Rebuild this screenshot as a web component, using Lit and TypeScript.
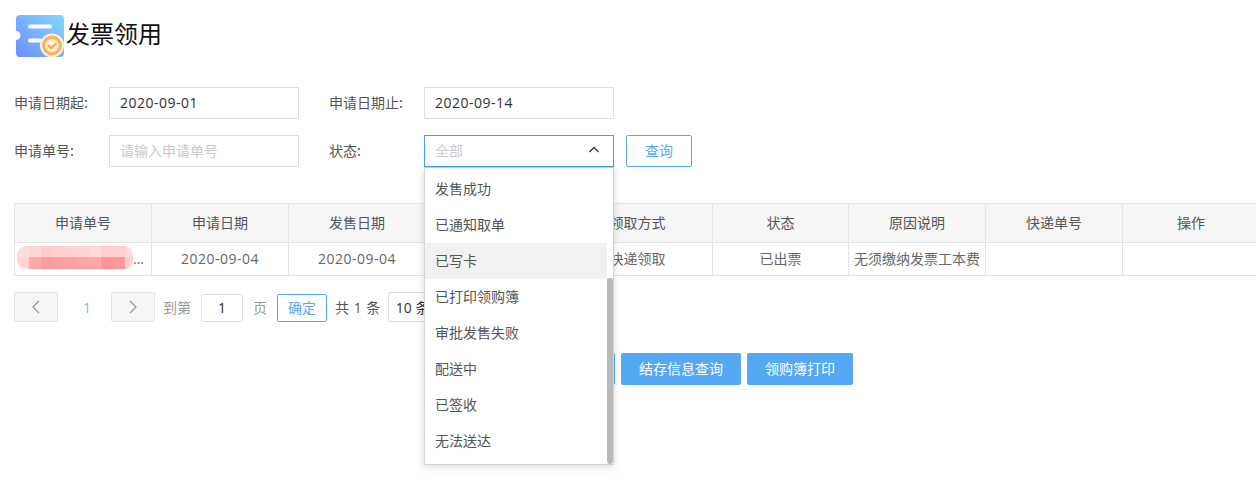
import { LitElement, html, css, svg } from "lit";
import { customElement } from "lit/decorators.js";

const headers = ["申请单号", "申请日期", "发售日期", "发售方式", "领取方式", "状态", "原因说明", "快递单号", "操作"];
const cells = ["", "2020-09-04", "2020-09-04", "", "快递领取", "已出票", "无须缴纳发票工本费", "", ""];
const options = ["发售成功", "已通知取单", "已写卡", "已打印领购簿", "审批发售失败", "配送中", "已签收", "无法送达"];
const mosaicTop = ["#ffdcdc", "#ffd6d6", "#ffcccc", "#ffcece", "#ffd2d2", "#ffd2d2", "#ffd8d8", "#ffcfcf", "#ffd0d0", "#ffdcdc"];
const mosaicBottom = ["#ffd4d4", "#ffa8a8", "#ff9c9c", "#ffa0a0", "#ffa2a2", "#ffa6a6", "#ffa8a8", "#ff9494", "#ff9a9a", "#ffcccc"];

@customElement("app-root")
export class AppRoot extends LitElement {
  static styles = css`
    :host { display: block; position: relative; width: 1256px; height: 491px; overflow: hidden; background: #fff;
      font-family: "Open Sans", "Noto Sans CJK SC", sans-serif; font-size: 14px; color: #606266; }
    .page { padding: 15px 0 0 14px; }
    .title { display: flex; align-items: flex-start; height: 42px; padding-left: 2px; color: #111; font-size: 24px; line-height: 38px; }
    .title svg { width: 48px; height: 42px; flex: none; margin-right: 2px; }
    .form { display: grid; grid-template-columns: 95px 190px 125px 190px 12px 66px; grid-auto-rows: 32px; row-gap: 16px; margin-top: 30px; align-items: center; }
    .form label { color: #555; font-family: "Noto Sans CJK SC", sans-serif; padding-bottom: 2px; }
    .form .second { padding-left: 30px; }
    .input { box-sizing: border-box; height: 32px; border: 1px solid #dcdfe6; display: flex; align-items: center; padding: 0 10px 2px; color: #303133; }
    .num-text { letter-spacing: .5px; }
    .ph { color: #c8c9cc; }
    .select { border-color: #409eff; justify-content: space-between; padding-right: 13px; }
    .query { grid-column: 6; box-sizing: border-box; height: 32px; padding-bottom: 2px; border: 1px solid #55a9f4; border-radius: 2px; color: #55a9f4; display: flex; align-items: center; justify-content: center; }
    .table { display: grid; grid-template-columns: 137px 137px 137px 137px 150px 136px 137px 137px 137px; margin-top: 36px; border-top: 1px solid #e4e4e4; border-left: 1px solid #e4e4e4; width: 1250px; box-sizing: border-box; }
    .cell { box-sizing: border-box; display: flex; align-items: center; justify-content: center; padding-bottom: 2px; border-right: 1px solid #e4e4e4; border-bottom: 1px solid #e4e4e4; white-space: nowrap; overflow: hidden; }
    .head { height: 39px; background: #f6f6f6; color: #555; }
    .body { height: 33px; color: #666; }
    .idcell { justify-content: flex-end; padding-right: 7px; position: relative; }
    .redact { position: absolute; left: 2px; top: 3px; width: 116px; height: 23px; filter: blur(.5px); }
    .pager { display: flex; align-items: center; height: 30px; margin-top: 16px; color: #999; }
    .nav { box-sizing: border-box; width: 44px; height: 30px; background: #f5f5f5; border: 1px solid #e4e4e4; border-radius: 2px; display: flex; align-items: center; justify-content: center; }
    .nav svg { width: 12px; height: 16px; }
    .num { box-sizing: border-box; width: 53px; padding-left: 5px; text-align: center; color: #8ab4dd; }
    .to { margin: 0 10px 0 8px; }
    .pinput { box-sizing: border-box; width: 42px; height: 28px; margin-top: 2px; padding-bottom: 2px; border: 1px solid #dcdfe6; border-radius: 2px; color: #303133; display: flex; align-items: center; justify-content: center; }
    .page-lbl { margin: 0 10px; }
    .ok { box-sizing: border-box; width: 50px; height: 28px; margin-top: 2px; padding-bottom: 2px; border: 1px solid #55a9f4; border-radius: 2px; color: #55a9f4; display: flex; align-items: center; justify-content: center; }
    .total { margin: 0 7px 0 8px; color: #555; white-space: nowrap; letter-spacing: .5px; }
    .size { box-sizing: border-box; width: 110px; height: 30px; border: 1px solid #dcdfe6; border-radius: 2px; color: #303133; display: flex; align-items: center; padding-left: 7px; }
    .actions { display: flex; gap: 6px; margin-top: 31px; padding-left: 495px; }
    .btn { box-sizing: border-box; height: 32px; padding-bottom: 2px; border-radius: 2px; background: #55a9f4; color: #fff; display: flex; align-items: center; justify-content: center; }
    .w106 { width: 106px; }
    .w120 { width: 120px; }
    .menu { position: absolute; left: 424px; top: 167px; width: 190px; height: 298px; box-sizing: border-box; background: #fff; border: 1px solid #d4d4d4; border-top-color: #ccc; box-shadow: 0 2px 8px rgba(0,0,0,.15); display: flex; }
    .list { flex: 1; padding-top: 3px; }
    .opt { box-sizing: border-box; height: 36px; display: flex; align-items: center; padding: 0 0 2px 10px; color: #555; }
    .opt.on { background: #f1f1f1; }
    .track { width: 6px; display: flex; flex-direction: column; justify-content: flex-end; }
    .thumb { height: 186px; background: #b9b9b9; border-radius: 2px 2px 3px 3px; }
  `;

  render() {
    return html`
      <div class="page">
        <div class="title">
          <svg viewBox="0 0 48 42" aria-hidden="true">
            <defs>
              <linearGradient id="tk" x1="0" y1="1" x2="1" y2="0">
                <stop offset="0" stop-color="#6a8fff"/><stop offset="1" stop-color="#86d6ff"/>
              </linearGradient>
            </defs>
            <path d="M4 0H44a4 4 0 0 1 4 4V38a4 4 0 0 1-4 4H4a4 4 0 0 1-4-4V25a4.500 4.500 0 0 0 0-9V4a4 4 0 0 1 4-4Z" fill="url(#tk)"/>
            <rect x="12" y="9.500" width="24" height="4" rx="2" fill="#fff"/>
            <rect x="12" y="23.500" width="14" height="4" rx="2" fill="#fff"/>
            <circle cx="36" cy="30.500" r="12" fill="#fff1e0"/>
            <circle cx="36" cy="30.500" r="10" fill="#fdb25d"/>
            <circle cx="36" cy="30.500" r="6.800" fill="#ffeeda"/>
            <path d="M32.500 30.500l2.800 2.800 4.700-4.700" fill="none" stroke="#f9a546" stroke-width="2" stroke-linecap="round" stroke-linejoin="round"/>
          </svg>
          <span>发票领用</span>
        </div>

        <div class="form">
          <label>申请日期起:</label>
          <div class="input"><span class="num-text">2020-09-01</span></div>
          <label class="second">申请日期止:</label>
          <div class="input"><span class="num-text">2020-09-14</span></div>
          <span></span><span></span>
          <label>申请单号:</label>
          <div class="input ph">请输入申请单号</div>
          <label class="second">状态:</label>
          <div class="input select ph">全部
            <svg width="12" height="8" viewBox="0 0 12 8"><path d="M1.500 6L6 1.500 10.500 6" fill="none" stroke="#333" stroke-width="1.300"/></svg>
          </div>
          <span></span>
          <div class="query">查询</div>
        </div>

        <div class="table">
          ${headers.map((h) => html`<div class="cell head">${h}</div>`)}
          ${cells.map((c, i) =>
            i === 0
              ? html`<div class="cell body idcell">
                  <svg class="redact" viewBox="0 0 116 23">
                    <defs><clipPath id="rc"><rect width="116" height="23" rx="9"/></clipPath></defs>
                    <g clip-path="url(#rc)">
                      ${mosaicTop.map((f, k) => svg`<rect x=${k * 12} y="0" width="12" height="11" fill=${f}/>`)}
                      ${mosaicBottom.map((f, k) => svg`<rect x=${k * 12} y="11" width="12" height="12" fill=${f}/>`)}
                    </g>
                  </svg>...</div>`
              : html`<div class="cell body"><span class=${i < 3 ? "num-text" : ""}>${c}</span></div>`
          )}
        </div>

        <div class="pager">
          <div class="nav"><svg viewBox="0 0 12 16"><path d="M9 2L3 8l6 6" fill="none" stroke="#999" stroke-width="1.300"/></svg></div>
          <div class="num">1</div>
          <div class="nav"><svg viewBox="0 0 12 16"><path d="M3 2l6 6-6 6" fill="none" stroke="#999" stroke-width="1.300"/></svg></div>
          <span class="to">到第</span>
          <div class="pinput">1</div>
          <span class="page-lbl">页</span>
          <div class="ok">确定</div>
          <span class="total">共 1 条</span>
          <div class="size">10 条/页</div>
        </div>

        <div class="actions">
          <div class="btn w106">发票验旧</div>
          <div class="btn w120">结存信息查询</div>
          <div class="btn w106">领购簿打印</div>
        </div>
      </div>

      <div class="menu">
        <div class="list">
          ${options.map((o, i) => html`<div class="opt ${i === 2 ? "on" : ""}">${o}</div>`)}
        </div>
        <div class="track"><div class="thumb"></div></div>
      </div>
    `;
  }
}
